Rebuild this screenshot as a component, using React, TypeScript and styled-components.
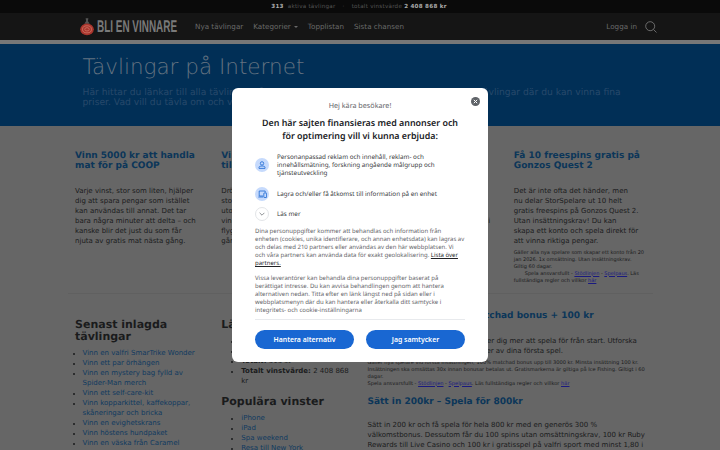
import React from "react";
import styled, { createGlobalStyle } from "styled-components";

// The colours below are the dimmed ones seen behind the consent dialog.
const GlobalStyle = createGlobalStyle`
  html, body {
    margin: 0;
    height: 100%;
    overflow: hidden;
    background: #666;
    color: #1a1b1c;
    font-family: "DejaVu Sans", Verdana, sans-serif;
    font-size: 7px;
    line-height: 10px;
    text-rendering: geometricPrecision;
  }
  * { box-sizing: border-box; }
`;

const TopBar = styled.div`
  height: 13px;
  background: #0a0a0a;
  color: #555;
  font-size: 5.6px;
  letter-spacing: 0.25px;
  line-height: 14px;
  text-align: center;
  b { margin-right: 2px; color: #aaa; }
  i { font-style: normal; margin: 0 5px; }
`;

const NavBar = styled.nav`
  height: 27px;
  padding: 0 63px 0 80px;
  display: flex;
  align-items: center;
  background: #151515;
`;

const Logo = styled.a`
  flex: none;
  display: flex;
  align-items: center;
  width: 115px;
  svg { flex: none; }
`;

const LogoText = styled.span`
  display: inline-block;
  width: 80px;
  margin-left: 3px;
  font-family: "Liberation Sans Narrow", "Liberation Sans", sans-serif;
  font-size: 17px;
  font-weight: 700;
  white-space: nowrap;
  color: #7a7a7a;
  transform: scaleX(0.585);
  transform-origin: left center;
`;

const NavLink = styled.a`
  margin-right: 10px;
  font-size: 7.2px;
  color: #6a6a6a;
  white-space: nowrap;
`;

const Caret = styled.span`
  display: inline-block;
  margin-left: 3px;
  vertical-align: middle;
  border: 2px solid transparent;
  border-top-color: #6a6a6a;
  border-bottom-width: 0;
`;

const NavEnd = styled.div`
  margin-left: auto;
  display: flex;
  align-items: center;
  gap: 8px;
  font-size: 7.2px;
  color: #6a6a6a;
`;

const Stripe = styled.div`
  height: 4px;
  background: #777;
`;

const Hero = styled.header`
  height: 82px;
  background: #012f56;
`;

const HeroInner = styled.div`
  width: 555px;
  margin: 0 auto;
  padding-top: 11px;
`;

const HeroTitle = styled.h1`
  margin: 0;
  font-size: 21.5px;
  line-height: 26px;
  font-weight: 300;
  color: #647381;
`;

const HeroLead = styled.p`
  margin: 7px 0 0;
  font-size: 9.2px;
  line-height: 10px;
  color: #27496b;
`;

const Container = styled.main`
  width: 585px;
  margin: 0 auto;
`;

const CardRow = styled.section`
  display: grid;
  grid-template-columns: repeat(4, 1fr);
  height: 168px;
  padding-top: 25px;
  border-bottom: 1px solid #606060;
`;

const Column = styled.article`
  padding: 0 7.5px;
  min-width: 0;
`;

const CardTitle = styled.h2`
  margin: 0 0 15px;
  font-size: 9px;
  line-height: 10px;
  font-weight: 700;
  color: #0c3659;
`;

const CardText = styled.p`
  margin: 0;
  font-size: 7px;
  line-height: 10px;
`;

const CardBlurb = styled(CardText)`
  padding-right: 5.5px;
`;

const FinePrint = styled.p`
  margin: 3.5px 0 0;
  font-size: 5px;
  line-height: 7px;
  a { color: #1a1a80; text-decoration: underline; }
`;

const IndentedLine = styled.span`
  padding-left: 11px;
`;

const LowerRow = styled.section`
  display: grid;
  grid-template-columns: 1fr 1fr 2fr;
  padding-top: 25px;
`;

const WideColumn = styled(Column)`
  margin-top: -8px;
`;

const SideHeading = styled.h3<{ $spaced?: boolean }>`
  margin: ${p => (p.$spaced ? "10px" : "0")} 0 5px;
  font-size: 11px;
  line-height: 12px;
  font-weight: 700;
`;

const LinkList = styled.ul<{ $wide?: boolean }>`
  margin: 0;
  padding-left: ${p => (p.$wide ? "20px" : "7.5px")};
  a { color: #103a60; }
  li::marker { font-size: 6px; }
`;

const SecondTitle = styled(CardTitle)`
  margin: 9px 0 13px;
`;

const WideFine = styled(FinePrint)`
  font-size: 5.1px;
`;

const DialogLayer = styled.div`
  position: fixed;
  inset: 0;
  z-index: 10;
  display: flex;
  justify-content: center;
  align-items: flex-start;
  padding-top: 88px;
`;

const Dialog = styled.div`
  position: relative;
  width: 256px;
  height: 274px;
  padding: 13px 23px 0;
  border-radius: 6px;
  background: #fff;
  color: #5f6368;
  font-family: "Noto Sans", "Open Sans", sans-serif;
`;

const CloseButton = styled.button`
  position: absolute;
  top: 9px;
  right: 8px;
  width: 9px;
  height: 9px;
  padding: 0;
  border: 0;
  background: none;
  display: flex;
`;

const Greeting = styled.p`
  margin: 0;
  font-size: 7.2px;
  line-height: 10px;
  text-align: center;
`;

const DialogTitle = styled.h2`
  margin: 5px 0 11px;
  font-size: 8.9px;
  line-height: 13px;
  font-weight: 600;
  text-align: center;
  white-space: nowrap;
  color: #202124;
`;

const Feature = styled.div`
  display: flex;
  align-items: center;
  gap: 8px;
  margin-bottom: 6px;
  font-size: 6.3px;
  line-height: 8px;
  color: #3c4043;
  &:first-of-type { margin-bottom: 10px; }
`;

const FeatureIcon = styled.span`
  flex: none;
  display: flex;
  align-items: center;
  justify-content: center;
  width: 14px;
  height: 14px;
  border-radius: 50%;
  background: #c6dafc;
`;

const MoreIcon = styled(FeatureIcon)`
  background: #fff;
  border: 1px solid #e3e5e8;
`;

const Consent = styled.p`
  margin: 0 0 7px;
  font-size: 6px;
  line-height: 8px;
  white-space: nowrap;
  color: #5f6368;
  a { color: #202124; text-decoration: underline; }
  &:last-of-type { margin-bottom: 5px; }
`;

const Rule = styled.hr`
  margin: 0;
  border: 0;
  border-top: 1px solid #e8eaed;
`;

const Actions = styled.div`
  display: flex;
  gap: 12px;
  margin-top: 10px;
`;

const ActionButton = styled.button`
  flex: 1;
  height: 19px;
  padding: 0;
  border: 0;
  border-radius: 10px;
  background: #1967d2;
  color: #fff;
  font-family: inherit;
  font-size: 6.9px;
  font-weight: 600;
`;

const recent = [
  "Vinn en valfri SmarTrike Wonder",
  "Vinn ett par örhängen",
  "Vinn en mystery bag fylld av Spider-Man merch",
  "Vinn ett self-care-kit",
  "Vinn kopparkittel, kaffekoppar, skåneringar och bricka",
  "Vinn en evighetskrans",
  "Vinn höstens hundpaket",
  "Vinn en väska från Caramel",
];

const popular = ["iPhone", "iPad", "Spa weekend", "Resa till New York"];

function BrandMark() {
  return (
    <svg width="14" height="18" viewBox="0 0 15 19">
      <path d="M6 0h3l-.6 3 2 3H4.600l2-3z" fill="#555" />
      <ellipse cx="7.500" cy="12" rx="7.300" ry="6.300" fill="#a8342c" />
      <ellipse cx="7.500" cy="12" rx="4.800" ry="3.800" fill="none" stroke="#d07a6a" strokeWidth="0.800" />
      <ellipse cx="7.500" cy="12" rx="2.400" ry="1.800" fill="none" stroke="#d07a6a" strokeWidth="0.800" />
    </svg>
  );
}

function SearchIcon() {
  return (
    <svg width="12" height="12" viewBox="0 0 12 12" fill="none" stroke="#808080" strokeWidth="0.800">
      <circle cx="5.200" cy="5.200" r="4.500" />
      <path d="M8.500 8.500l3 3" />
    </svg>
  );
}

function CloseIcon() {
  return (
    <svg width="9" height="9" viewBox="0 0 9 9">
      <circle cx="4.500" cy="4.500" r="4.500" fill="#5f6368" />
      <path d="M2.800 2.800l3.400 3.400M6.200 2.800L2.800 6.200" stroke="#fff" strokeWidth="1" />
    </svg>
  );
}

function PersonIcon() {
  return (
    <svg width="8" height="8" viewBox="0 0 8 8" fill="none" stroke="#1967d2" strokeWidth="0.800">
      <circle cx="4" cy="2.400" r="1.700" />
      <path d="M1 7.400V6.300c0-.8 1.400-1.300 3-1.300s3 .5 3 1.300v1.100z" />
    </svg>
  );
}

function DeviceIcon() {
  return (
    <svg width="9" height="8" viewBox="0 0 9 8" fill="none" stroke="#1967d2" strokeWidth="0.800">
      <path d="M5 6H1.200V1h6v1.500M.300 7h4.700" />
      <rect x="5.800" y="3" width="2.800" height="4.500" rx="0.400" />
    </svg>
  );
}

function ChevronIcon() {
  return (
    <svg width="6" height="4" viewBox="0 0 6 4" fill="none" stroke="#5f6368" strokeWidth="0.700">
      <path d="M.6.800L3 3.200 5.400.800" />
    </svg>
  );
}

export default function App() {
  return (
    <>
      <GlobalStyle />
      <TopBar>
        <b>313</b> aktiva tävlingar <i>·</i> totalt vinstvärde <b>2 408 868 kr</b>
      </TopBar>
      <NavBar>
        <Logo>
          <BrandMark />
          <LogoText>BLI EN VINNARE</LogoText>
        </Logo>
        <NavLink>Nya tävlingar</NavLink>
        <NavLink>Kategorier<Caret /></NavLink>
        <NavLink>Topplistan</NavLink>
        <NavLink>Sista chansen</NavLink>
        <NavEnd>
          Logga in
          <SearchIcon />
        </NavEnd>
      </NavBar>
      <Stripe />
      <Hero>
        <HeroInner>
          <HeroTitle>Tävlingar på Internet</HeroTitle>
          <HeroLead>
            Här hittar du länkar till alla tävlingar på Internet. Vi har samlat de bästa och populära
            tävlingar där du kan vinna fina priser. Vad vill du tävla om och vinna idag?
          </HeroLead>
        </HeroInner>
      </Hero>
      <Container>
        <CardRow>
          <Column>
            <CardTitle>Vinn 5000 kr att handla mat för på COOP</CardTitle>
            <CardBlurb>
              Varje vinst, stor som liten, hjälper dig att spara pengar som istället kan användas till annat. Det tar
              bara några minuter att delta – och kanske blir det just du som får njuta av gratis mat nästa gång.
            </CardBlurb>
          </Column>
          <Column>
            <CardTitle>Vinn en härlig weekend till Paris</CardTitle>
            <CardBlurb>
              Drömmer du om en resa till
              <br />
              storstaden? Nu kan du åka
              <br />
              utomlands helt gratis. Som
              <br />
              vinnare får du både en
              <br />
              flygresa och hotell nästa
              <br />
              gång.
            </CardBlurb>
          </Column>
          <Column>
            <CardTitle>Vinn en resa till Skottland och Irland</CardTitle>
            <CardText>
              Res bort över en långhelg
              <br />
              med hela familjen. Det tar
              <br />
              bara en minut att delta och
              <br />
              Vinnarna utses nu den 31 januari, i
              <br />
              tävlingen nästa vecka.
            </CardText>
          </Column>
          <Column>
            <CardTitle>Få 10 freespins gratis på Gonzos Quest 2</CardTitle>
            <CardText>
              Det är inte ofta det händer, men
              <br />
              nu delar StorSpelare ut 10 helt
              <br />
              gratis freespins på Gonzos Quest 2.
              <br />
              Utan insättningskrav! Du kan
              <br />
              skapa ett konto och spela direkt för
              <br />
              att vinna riktiga pengar.
            </CardText>
            <FinePrint>
              Gäller alla nya spelare som skapar ett konto från 20 jan 2026. 1x omsättning. Utan insättningskrav.
              Giltig 60 dagar.
              <br />
              <IndentedLine />Spela ansvarsfullt - <a>Stödlinjen</a> - <a>Spelpaus</a>. Läs fullständiga regler och
              villkor <a>här</a>
            </FinePrint>
          </Column>
        </CardRow>
        <LowerRow>
          <Column>
            <SideHeading>Senast inlagda tävlingar</SideHeading>
            <LinkList>
              {recent.map(item => (
                <li key={item}><a>{item}</a></li>
              ))}
            </LinkList>
          </Column>
          <Column>
            <SideHeading>Läget just nu</SideHeading>
            <LinkList $wide>
              <li><b>Nya idag:</b> 4 st</li>
              <li><b>Idag:</b> 2 st</li>
              <li><b>Totalt:</b> 313 st</li>
              <li><b>Totalt vinstvärde:</b> 2 408 868 kr</li>
            </LinkList>
            <SideHeading $spaced>Populära vinster</SideHeading>
            <LinkList $wide>
              {popular.map(item => (
                <li key={item}><a>{item}</a></li>
              ))}
            </LinkList>
          </Column>
          <WideColumn>
            <CardTitle>Sätt in och få 100% matchad bonus + 100 kr</CardTitle>
            <CardText>
              Den här bonusen på hela 100 % ger dig mer att spela för från start. Utforska vårt stora utbud och få ut
              ännu mer av dina första spel.
            </CardText>
            <WideFine>
              Gäller nya spelare vid första insättningen; 100% matchad bonus upp till 3000 kr. Minsta insättning 100 kr.
              Insättningen ska omsättas 30x innan bonusar betalas ut. Gratismarkerna är giltiga på Ice Fishing. Giltigt
              i 60 dagar.
              <br />
              Spela ansvarsfullt - <a>Stödlinjen</a> - <a>Spelpaus</a>. Läs fullständiga regler och villkor <a>här</a>
            </WideFine>
            <SecondTitle>Sätt in 200kr – Spela för 800kr</SecondTitle>
            <CardText>
              Sätt in 200 kr och få spela för hela 800 kr med en generös 300 % välkomstbonus. Dessutom får du 100 spins
              utan omsättningskrav, 100 kr Ruby Rewards till Live Casino och 100 kr i gratisspel på valfri sport med
              minst 1,80 i odds.
            </CardText>
          </WideColumn>
        </LowerRow>
      </Container>
      <DialogLayer>
        <Dialog>
          <CloseButton><CloseIcon /></CloseButton>
          <Greeting>Hej kära besökare!</Greeting>
          <DialogTitle>
            Den här sajten finansieras med annonser och
            <br />
            för optimering vill vi kunna erbjuda:
          </DialogTitle>
          <Feature>
            <FeatureIcon><PersonIcon /></FeatureIcon>
            <span>
              Personanpassad reklam och innehåll, reklam- och innehållsmätning, forskning angående målgrupp och
              tjänsteutveckling
            </span>
          </Feature>
          <Feature>
            <FeatureIcon><DeviceIcon /></FeatureIcon>
            <span>Lagra och/eller få åtkomst till information på en enhet</span>
          </Feature>
          <Feature>
            <MoreIcon><ChevronIcon /></MoreIcon>
            <span>Läs mer</span>
          </Feature>
          <Consent>
            Dina personuppgifter kommer att behandlas och information från
            <br />
            enheten (cookies, unika identifierare, och annan enhetsdata) kan lagras av
            <br />
            och delas med 210 partners eller användas av den här webbplatsen. Vi
            <br />
            och våra partners kan använda data för exakt geolokalisering. <a>Lista över</a>
            <br />
            <a>partners.</a>
          </Consent>
          <Consent>
            Vissa leverantörer kan behandla dina personuppgifter baserat på
            <br />
            berättigat intresse. Du kan avvisa behandlingen genom att hantera
            <br />
            alternativen nedan. Titta efter en länk längst ned på sidan eller i
            <br />
            webbplatsmenyn där du kan hantera eller återkalla ditt samtycke i
            <br />
            integritets- och cookie-inställningarna
          </Consent>
          <Rule />
          <Actions>
            <ActionButton>Hantera alternativ</ActionButton>
            <ActionButton>Jag samtycker</ActionButton>
          </Actions>
        </Dialog>
      </DialogLayer>
    </>
  );
}
